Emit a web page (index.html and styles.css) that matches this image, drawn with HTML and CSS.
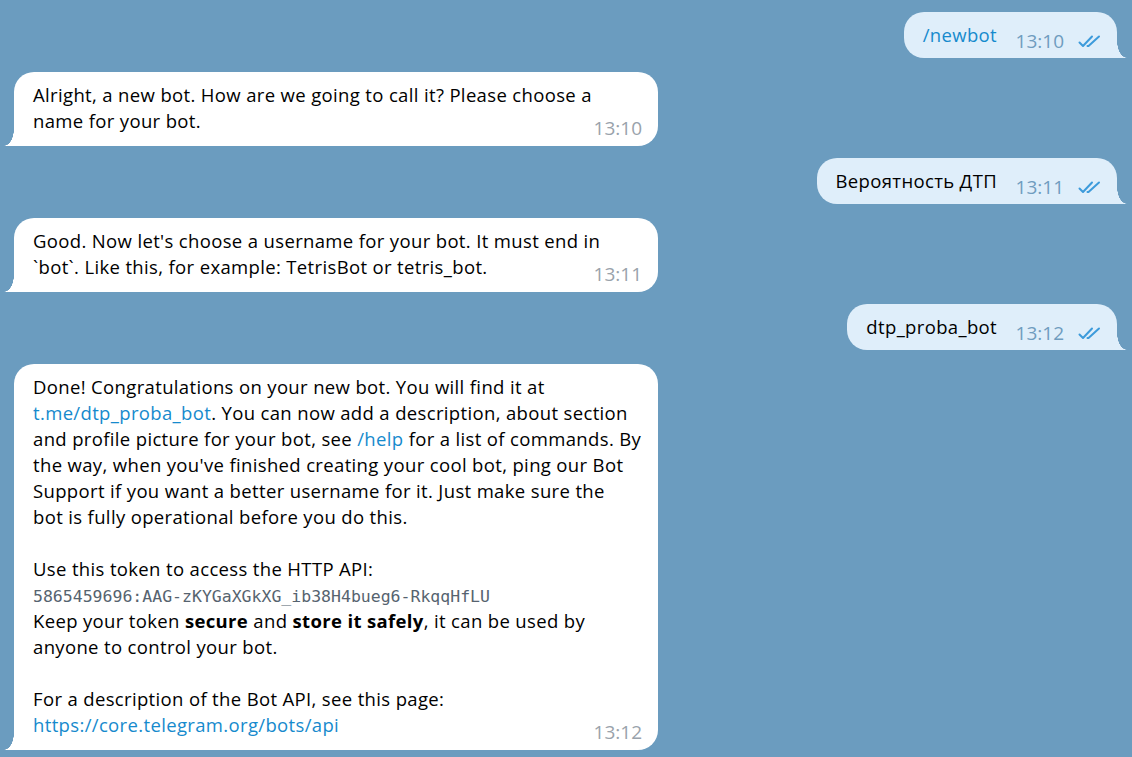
FILE: index.html
```html
<!DOCTYPE html>
<html lang="en">
<head>
<meta charset="utf-8">
<title>BotFather</title>
<link rel="stylesheet" href="styles.css">
</head>
<body>
<div class="chat">
  <div class="msg out">
    <div class="bubble">
      <div class="text"><a class="link">/newbot</a><span class="spacer"></span></div>
      <div class="meta"><span class="time">13:10</span><svg class="checks" viewBox="0 0 25 13" width="25" height="13"><path d="M1.5 7.5 L5 11 L14 1.5"/><path d="M9.5 11 L10.5 11 L21 1.5"/></svg></div>
    </div>
  </div>

  <div class="msg in">
    <div class="bubble">
      <div class="text">Alright, a new bot. How are we going to call it? Please choose a<br>name for your bot.<span class="spacer"></span></div>
      <div class="meta"><span class="time">13:10</span></div>
    </div>
  </div>

  <div class="msg out">
    <div class="bubble">
      <div class="text">Вероятность ДТП<span class="spacer"></span></div>
      <div class="meta"><span class="time">13:11</span><svg class="checks" viewBox="0 0 25 13" width="25" height="13"><path d="M1.5 7.5 L5 11 L14 1.5"/><path d="M9.5 11 L10.5 11 L21 1.5"/></svg></div>
    </div>
  </div>

  <div class="msg in">
    <div class="bubble">
      <div class="text">Good. Now let's choose a username for your bot. It must end in<br>`bot`. Like this, for example: TetrisBot or tetris_bot.<span class="spacer"></span></div>
      <div class="meta"><span class="time">13:11</span></div>
    </div>
  </div>

  <div class="msg out">
    <div class="bubble">
      <div class="text">dtp_proba_bot<span class="spacer"></span></div>
      <div class="meta"><span class="time">13:12</span><svg class="checks" viewBox="0 0 25 13" width="25" height="13"><path d="M1.5 7.5 L5 11 L14 1.5"/><path d="M9.5 11 L10.5 11 L21 1.5"/></svg></div>
    </div>
  </div>

  <div class="msg in">
    <div class="bubble">
      <div class="text">Done! Congratulations on your new bot. You will find it at<br><a class="link">t.me/dtp_proba_bot</a>. You can now add a description, about section<br>and profile picture for your bot, see <a class="link">/help</a> for a list of commands. By<br>the way, when you've finished creating your cool bot, ping our Bot<br>Support if you want a better username for it. Just make sure the<br>bot is fully operational before you do this.<br><br>Use this token to access the HTTP API:<br><code class="token">5865459696:AAG-zKYGaXGkXG_ib38H4bueg6-RkqqHfLU</code><br>Keep your token <b>secure</b> and <b>store it safely</b>, it can be used by<br>anyone to control your bot.<br><br>For a description of the Bot API, see this page:<br><a class="link">https://core.telegram.org/bots/api</a><span class="spacer"></span></div>
      <div class="meta"><span class="time">13:12</span></div>
    </div>
  </div>
</div>
</body>
</html>
```

FILE: styles.css
```css
html, body {
  margin: 0;
  padding: 0;
}

body {
  background: #6b9cbf;
  font-family: "Open Sans", "Noto Sans", sans-serif;
  font-size: 18.5px;
  letter-spacing: 0.35px;
  color: #000;
  width: 1132px;
  height: 757px;
  overflow: hidden;
}

.chat {
  display: flex;
  flex-direction: column;
  padding: 12px 15px 0 14px;
}

.msg {
  display: flex;
}

.msg.out {
  justify-content: flex-end;
  margin-bottom: 14px;
}

.msg.in {
  justify-content: flex-start;
  margin-bottom: 12px;
}

.bubble {
  position: relative;
  border-radius: 20px;
}

.msg.in .bubble {
  background: #ffffff;
  width: 644px;
  box-sizing: border-box;
  padding: 10px 16px 12px 19px;
  border-bottom-left-radius: 0;
}

.msg.out .bubble {
  background: #dfeefa;
  padding: 10px 14px 10px 19px;
  border-bottom-right-radius: 0;
}

.msg.in .bubble::after,
.msg.out .bubble::after {
  content: "";
  position: absolute;
  bottom: 0;
  width: 10px;
  height: 17px;
}

.msg.in .bubble::after {
  left: -10px;
  background: radial-gradient(10px 17px at 0 0, rgba(255,255,255,0) 97%, #ffffff 100%);
}

.msg.out .bubble::after {
  right: -10px;
  background: radial-gradient(10px 17px at 100% 0, rgba(223,238,250,0) 97%, #dfeefa 100%);
}

.text {
  line-height: 26px;
  white-space: nowrap;
}

.spacer {
  display: inline-block;
  width: 60px;
  height: 1px;
}

.msg.out .spacer {
  width: 106px;
}

.link {
  color: #168acd;
  text-decoration: none;
}

b {
  font-weight: 700;
}

.token {
  font-family: "DejaVu Sans Mono", "Liberation Mono", monospace;
  font-size: 16.5px;
  line-height: 1;
  letter-spacing: 0;
  color: #56636f;
}

.meta {
  position: absolute;
  display: flex;
  align-items: baseline;
  gap: 14px;
  font-size: 19px;
  letter-spacing: 0;
  line-height: 20px;
}

.msg.in .meta {
  right: 16px;
  bottom: 8px;
}

.msg.out .meta {
  right: 14px;
  bottom: 7px;
}

.msg.in .time {
  color: #99a2ab;
}

.msg.out .time {
  color: #6f9cbf;
}

.checks {
  fill: none;
  stroke: #3d9bdb;
  stroke-width: 2;
  stroke-linecap: round;
  stroke-linejoin: round;
}
```
